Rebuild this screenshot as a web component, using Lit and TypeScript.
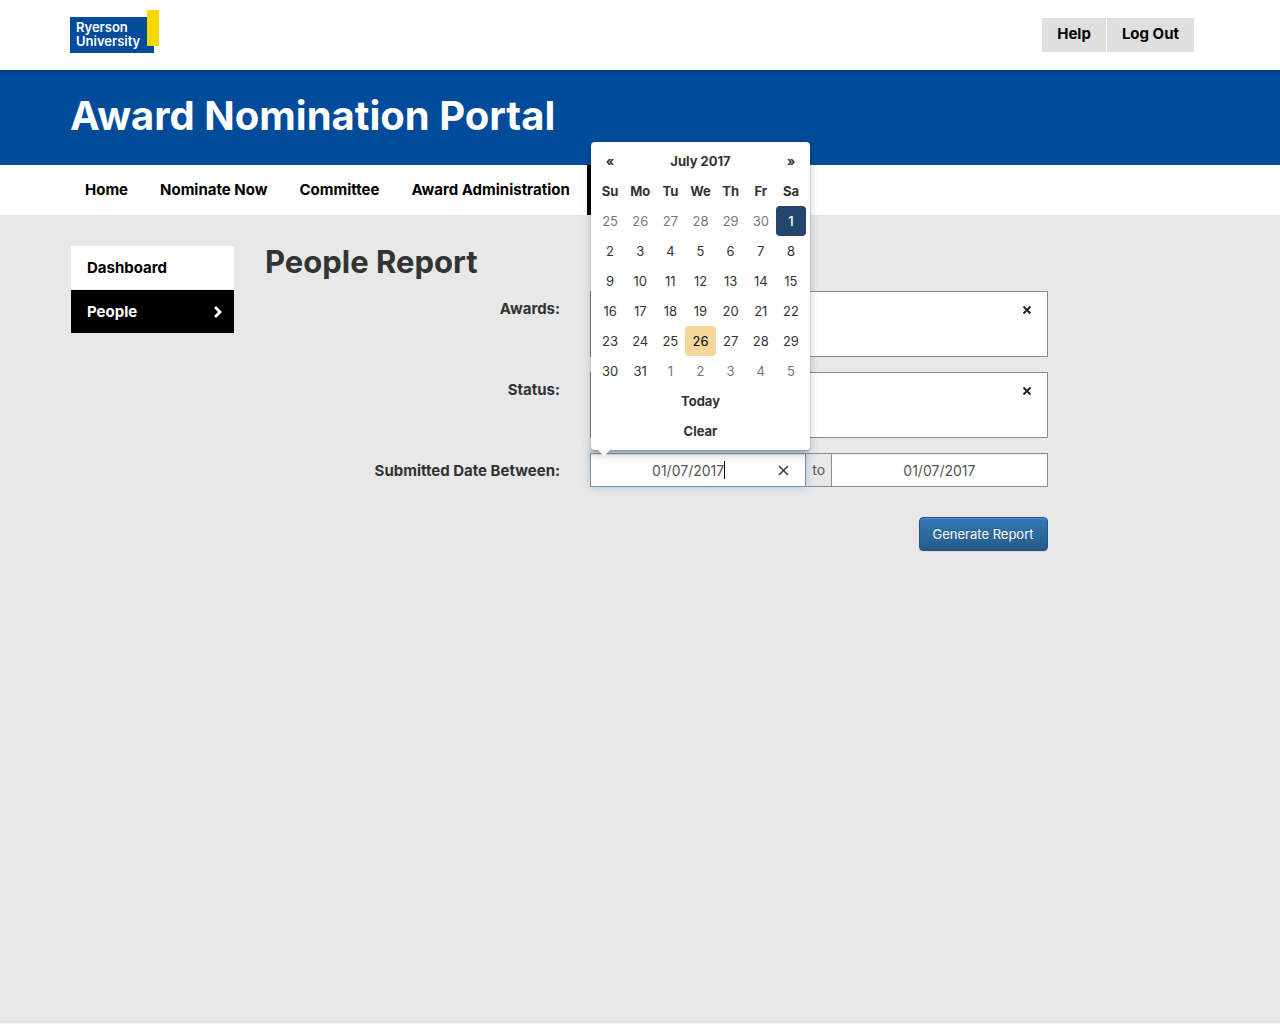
import { LitElement, html, css } from "lit";
import { customElement, state } from "lit/decorators.js";
import { classMap } from "lit/directives/class-map.js";

const WEEKDAYS = ["Su", "Mo", "Tu", "We", "Th", "Fr", "Sa"];
const WEEKS = [
  [25, 26, 27, 28, 29, 30, 1],
  [2, 3, 4, 5, 6, 7, 8],
  [9, 10, 11, 12, 13, 14, 15],
  [16, 17, 18, 19, 20, 21, 22],
  [23, 24, 25, 26, 27, 28, 29],
  [30, 31, 1, 2, 3, 4, 5],
];

@customElement("date-picker")
class DatePicker extends LitElement {
  static styles = css`
    :host {
      display: block;
      box-sizing: border-box;
      width: 219px;
      padding: 4px;
      background: #fff;
      border-radius: 4px;
      box-shadow: 0 5px 10px rgba(0, 0, 0, 0.2), 0 1px 2px rgba(0, 0, 0, 0.25);
      color: #333;
      font-size: 13px;
    }
    :host::after {
      content: "";
      position: absolute;
      left: 7px;
      bottom: -6px;
      border: 6px solid transparent;
      border-top-color: #fff;
      border-bottom: 0;
    }
    .month {
      width: 100%;
      border-collapse: collapse;
      table-layout: fixed;
      text-align: center;
    }
    .month th,
    .month td {
      height: 30px;
      padding: 0;
    }
    .pick {
      display: block;
      width: 100%;
      height: 30px;
      padding: 0;
      border: 0;
      border-radius: 4px;
      background: none;
      color: inherit;
      font: inherit;
      cursor: pointer;
    }
    .outside {
      color: #777;
    }
    .selected {
      background: #22466d;
      color: #fff;
      font-weight: 500;
    }
    .today {
      background: #f7d799;
      color: #000;
    }
  `;

  private day(n: number, week: number) {
    const outside = (week === 0 && n > 7) || (week === 5 && n < 8);
    const cls = {
      pick: true,
      outside,
      selected: !outside && n === 1,
      today: !outside && n === 26,
    };
    return html`<td><button type="button" class=${classMap(cls)}>${n}</button></td>`;
  }

  render() {
    return html`
      <table class="month">
        <thead>
          <tr>
            <th><button type="button" class="pick">«</button></th>
            <th colspan="5"><button type="button" class="pick">July 2017</button></th>
            <th><button type="button" class="pick">»</button></th>
          </tr>
          <tr>
            ${WEEKDAYS.map((d) => html`<th>${d}</th>`)}
          </tr>
        </thead>
        <tbody>
          ${WEEKS.map((w, i) => html`<tr>${w.map((n) => this.day(n, i))}</tr>`)}
        </tbody>
        <tfoot>
          <tr>
            <th colspan="7"><button type="button" class="pick">Today</button></th>
          </tr>
          <tr>
            <th colspan="7"><button type="button" class="pick">Clear</button></th>
          </tr>
        </tfoot>
      </table>
    `;
  }
}

@customElement("app-root")
class AppRoot extends LitElement {
  @state() private from = "01/07/2017";
  @state() private to = "01/07/2017";

  static styles = css`
    :host {
      display: block;
      box-sizing: border-box;
      min-height: 100vh;
      border-bottom: 1px solid #f3f3f3;
      background: #e8e8e8;
      color: #333;
      font-family: Inter, Roboto, "Liberation Sans", sans-serif;
      font-size: 14px;
      line-height: 20px;
    }
    * {
      box-sizing: border-box;
    }
    a {
      color: inherit;
      text-decoration: none;
    }
    .container {
      max-width: 1140px;
      margin: 0 auto;
    }
    .top {
      background: #fff;
    }
    .top .container {
      display: flex;
      justify-content: space-between;
      align-items: flex-start;
      height: 70px;
      padding: 10px 16px 0 0;
    }
    .logo {
      display: block;
    }
    .logo text {
      font-size: 13px;
      font-weight: 600;
      fill: #fff;
    }
    .account {
      display: flex;
      gap: 1px;
      margin-top: 8px;
      font-size: 15px;
    }
    .account a {
      padding: 6px 15px 8px;
      background: #dfdfdf;
      color: #000;
      font-weight: 700;
    }
    .banner {
      background: #004c9b;
      box-shadow: inset 0 4px 3px -2px #003a78;
    }
    .banner h1 {
      margin: 0;
      padding: 22px 0 25px;
      color: #fff;
      font-size: 40px;
      line-height: 48px;
      font-weight: 700;
    }
    .nav {
      background: #fff;
    }
    .nav .container {
      display: flex;
      gap: 2px;
      height: 50px;
      font-size: 15px;
    }
    .nav a {
      padding: 15px;
      color: #000;
      font-weight: 700;
    }
    .nav .current {
      width: 90px;
      background: #000;
    }
    .page {
      display: grid;
      grid-template-columns: 164px 1fr;
      gap: 31px;
      padding-top: 31px;
    }
    .side {
      display: flex;
      flex-direction: column;
      gap: 1px;
      padding-left: 1px;
      font-size: 15px;
    }
    .side a {
      display: flex;
      justify-content: space-between;
      align-items: center;
      height: 43px;
      padding: 0 11px 0 16px;
      background: #fff;
      color: #000;
      font-weight: 700;
    }
    .side .active {
      background: #000;
      color: #fff;
    }
    h2 {
      margin: 0 0 13px;
      font-size: 31px;
      line-height: 32px;
      font-weight: 700;
    }
    .form {
      display: grid;
      grid-template-columns: 4fr 6fr 2fr;
      row-gap: 15px;
      margin: 0 -15px;
    }
    .label {
      grid-column: 1;
      padding: 8px 15px 0;
      font-size: 15px;
      text-align: right;
      font-weight: 700;
    }
    .field {
      grid-column: 2;
      margin: 0 15px;
    }
    .multi {
      display: flex;
      align-items: flex-start;
      height: 66px;
      padding: 8px 12px;
      border: 1px solid #8c8c8c;
      background: #fff;
    }
    .multi input {
      flex: 1;
      min-width: 0;
      border: 0;
      outline: 0;
      background: none;
      font: inherit;
    }
    .icon {
      display: grid;
      place-items: center;
      width: 16px;
      height: 20px;
      padding: 0;
      border: 0;
      background: none;
      color: #222;
      cursor: pointer;
    }
    .range {
      display: flex;
      align-items: stretch;
    }
    .date {
      position: relative;
      flex: 1;
      height: 34px;
    }
    .date input {
      width: 100%;
      height: 100%;
      padding: 0 12px;
      border: 1px solid #8c8c8c;
      border-radius: 0;
      outline: 0;
      background: #fff;
      box-shadow: inset 0 1px 1px rgba(0, 0, 0, 0.075);
      color: #555;
      font: inherit;
      text-align: center;
    }
    .open input {
      padding-right: 32px;
      box-shadow: inset 0 1px 1px rgba(0, 0, 0, 0.075), 0 0 8px rgba(102, 175, 233, 0.6);
    }
    .open .icon {
      position: absolute;
      right: 15px;
      top: 7px;
    }
    .caret {
      position: absolute;
      left: calc(50% + 26px);
      top: 8px;
      width: 1px;
      height: 18px;
      background: #000;
    }
    date-picker {
      position: absolute;
      left: 1px;
      bottom: 37px;
      z-index: 2;
    }
    .between {
      width: 25px;
      padding-top: 6px;
      border: solid #8c8c8c;
      border-width: 1px 0;
      color: #555;
      text-align: center;
    }
    .actions {
      grid-column: 2;
      margin: 15px 15px 0;
      text-align: right;
    }
    .submit {
      height: 34px;
      padding: 0 13px;
      border: 1px solid #245580;
      border-radius: 4px;
      background: linear-gradient(#337ab7, #265a88);
      box-shadow: inset 0 1px 0 rgba(255, 255, 255, 0.15), 0 1px 1px rgba(0, 0, 0, 0.075);
      color: #fff;
      font: inherit;
      font-size: 13px;
      text-shadow: 0 -1px 0 rgba(0, 0, 0, 0.2);
      cursor: pointer;
    }
  `;

  private multi(id: string, label: string) {
    return html`
      <label class="label" for=${id}>${label}</label>
      <div class="field multi">
        <input id=${id} type="text" />
        <button type="button" class="icon" aria-label="Clear">
          <svg width="10" height="8" viewBox="0 0 10 8">
            <path d="M1.5 0.5L8.5 7.5M8.5 0.5L1.5 7.5" stroke="currentColor" stroke-width="2" />
          </svg>
        </button>
      </div>
    `;
  }

  render() {
    return html`
      <header class="top">
        <div class="container">
          <a href="#" aria-label="Ryerson University">
            <svg class="logo" width="90" height="44" viewBox="0 0 90 44">
              <rect y="7" width="84" height="36" fill="#004c9b" />
              <rect x="77" width="12" height="36" fill="#f9d700" />
              <text x="6" y="22">Ryerson</text>
              <text x="6" y="36">University</text>
            </svg>
          </a>
          <nav class="account"><a href="#">Help</a><a href="#">Log Out</a></nav>
        </div>
      </header>
      <div class="banner">
        <div class="container"><h1>Award Nomination Portal</h1></div>
      </div>
      <nav class="nav">
        <div class="container">
          <a href="#">Home</a>
          <a href="#">Nominate Now</a>
          <a href="#">Committee</a>
          <a href="#">Award Administration</a>
          <a href="#" class="current" aria-current="page"></a>
        </div>
      </nav>
      <div class="container page">
        <nav class="side">
          <a href="#">Dashboard</a>
          <a href="#" class="active">
            People
            <svg width="10" height="12" viewBox="0 0 10 12">
              <path d="M2 1L7 6L2 11" fill="none" stroke="currentColor" stroke-width="2.8" />
            </svg>
          </a>
        </nav>
        <main>
          <h2>People Report</h2>
          <form class="form" @submit=${(e: Event) => e.preventDefault()}>
            ${this.multi("awards", "Awards:")} ${this.multi("status", "Status:")}
            <label class="label" for="from">Submitted Date Between:</label>
            <div class="field range">
              <div class="date open">
                <input id="from" type="text" .value=${this.from} />
                <span class="caret"></span>
                <button type="button" class="icon" aria-label="Clear date">
                  <svg width="11" height="11" viewBox="0 0 11 11">
                    <path d="M1 1L10 10M10 1L1 10" stroke="#444" stroke-width="1.7" />
                  </svg>
                </button>
                <date-picker></date-picker>
              </div>
              <label class="between" for="to">to</label>
              <div class="date"><input id="to" type="text" .value=${this.to} /></div>
            </div>
            <div class="actions"><button class="submit">Generate Report</button></div>
          </form>
        </main>
      </div>
    `;
  }
}
